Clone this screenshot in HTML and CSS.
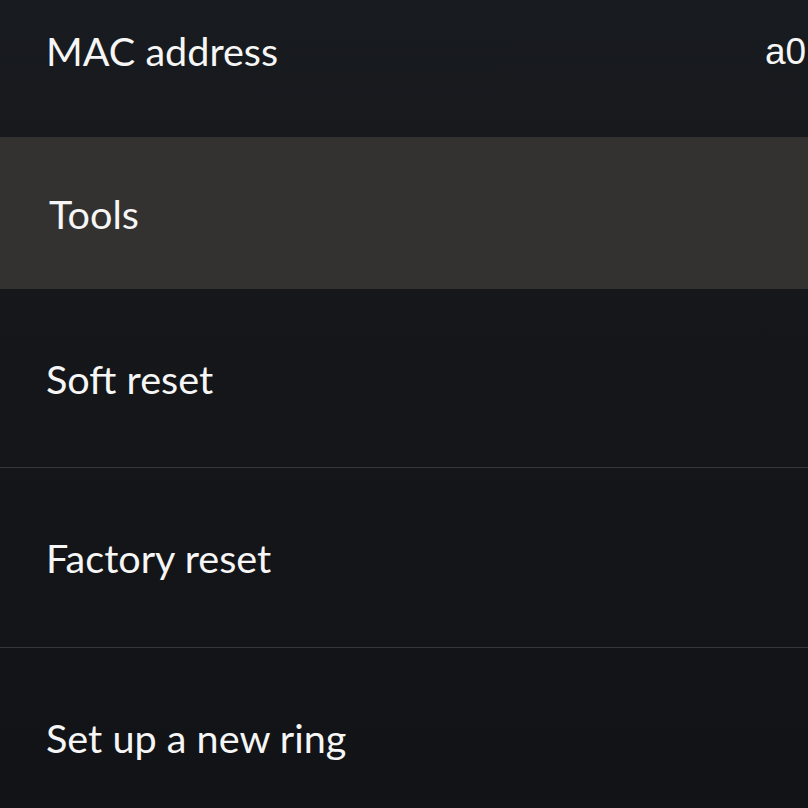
FILE: index.html
```html
<!DOCTYPE html>
<html>
<head>
<meta charset="utf-8">
<link rel="stylesheet" href="styles.css">
</head>
<body>
<div class="screen">
  <div class="row row-first">
    <span class="label">MAC address</span>
    <span class="value">a0:38:f8:12:3c:7e</span>
  </div>
  <div class="section">
    <span class="section-title">Tools</span>
  </div>
  <div class="row row-soft">
    <span class="label">Soft reset</span>
  </div>
  <div class="row row-sep">
    <span class="label">Factory reset</span>
  </div>
  <div class="row row-sep">
    <span class="label">Set up a new ring</span>
  </div>
</div>
</body>
</html>
```

FILE: styles.css
```css
html, body {
  margin: 0;
  padding: 0;
}
body {
  width: 808px;
  height: 808px;
  overflow: hidden;
  background: linear-gradient(180deg, #181b1f 0%, #141619 50%, #111316 100%);
  font-family: "Lato", "Open Sans", sans-serif;
  color: #f6f6f6;
}
.screen {
  display: flex;
  flex-direction: column;
}
.row {
  display: flex;
  align-items: center;
  padding-left: 46px;
  font-size: 39.6px;
  white-space: nowrap;
  overflow: hidden;
}
.row-first {
  height: 137px;
  display: grid;
  grid-template-columns: 719px max-content;
  align-items: start;
  padding-top: 27px;
  box-sizing: border-box;
}
.value {
  font-family: "Liberation Sans", Arial, sans-serif;
  font-size: 37px;
  line-height: 48px;
  padding-top: 1px;
}
.section {
  height: 152px;
  background: #333231;
  display: flex;
  align-items: center;
  padding-left: 49px;
  font-size: 39.6px;
}
.row-soft {
  height: 178px;
}
.row-sep {
  height: 179px;
  border-top: 1px solid #34373b;
}
```
